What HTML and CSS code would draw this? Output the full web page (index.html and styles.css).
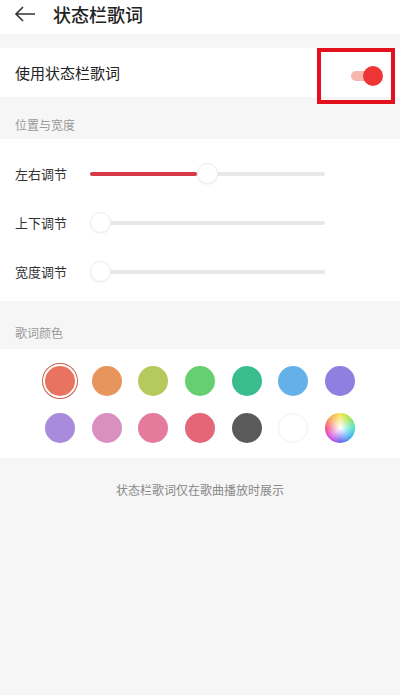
FILE: index.html
```html
<!DOCTYPE html>
<html lang="zh">
<head>
<meta charset="utf-8">
<link rel="stylesheet" href="styles.css">
</head>
<body>
<div class="page">
  <header class="topbar">
    <svg class="back" width="22" height="18" viewBox="0 0 22 18"><path d="M21 9H2M9 2L2 9l7 7" fill="none" stroke="#333" stroke-width="1.6"/></svg>
    <h1 class="title">状态栏歌词</h1>
  </header>
  <div class="gap"></div>
  <div class="switch-row">
    <span class="switch-label">使用状态栏歌词</span>
    <div class="highlight">
      <div class="toggle"><span class="track"></span><span class="knob"></span></div>
    </div>
  </div>
  <div class="section-title first">位置与宽度</div>
  <div class="card sliders">
    <div class="slider-row">
      <span class="slider-label">左右调节</span>
      <div class="slider" style="--p:0.5"><span class="fill"></span><span class="thumb"></span></div>
    </div>
    <div class="slider-row">
      <span class="slider-label">上下调节</span>
      <div class="slider" style="--p:0"><span class="thumb"></span></div>
    </div>
    <div class="slider-row">
      <span class="slider-label">宽度调节</span>
      <div class="slider" style="--p:0"><span class="thumb"></span></div>
    </div>
  </div>
  <div class="section-title">歌词颜色</div>
  <div class="card colors">
    <div class="grid">
      <span class="dot selected c1"></span>
      <span class="dot c2"></span>
      <span class="dot c3"></span>
      <span class="dot c4"></span>
      <span class="dot c5"></span>
      <span class="dot c6"></span>
      <span class="dot c7"></span>
      <span class="dot c8"></span>
      <span class="dot c9"></span>
      <span class="dot c10"></span>
      <span class="dot c11"></span>
      <span class="dot c12"></span>
      <span class="dot c13"></span>
      <span class="dot c14"></span>
    </div>
  </div>
  <p class="note">状态栏歌词仅在歌曲播放时展示</p>
</div>
</body>
</html>
```
FILE: styles.css
```css
* { box-sizing: border-box; }
html, body { margin: 0; padding: 0; }
body {
  background: #f6f6f6;
  font-family: "Noto Sans CJK SC", "Noto Sans", sans-serif;
  width: 400px;
  height: 695px;
  overflow: hidden;
}
.page { display: flex; flex-direction: column; }
.topbar {
  height: 34px;
  background: #fff;
  display: flex;
  align-items: center;
  padding-left: 14px;
  padding-bottom: 7px;
}
.back { display: block; }
.title {
  margin: 0 0 0 17px;
  font-size: 18px;
  font-weight: 500;
  color: #222;
  line-height: 1;
}
.gap { height: 14px; }
.switch-row {
  height: 49px;
  background: #fff;
  display: flex;
  align-items: center;
  justify-content: space-between;
  padding-left: 15px;
  padding-right: 5px;
}
.switch-label { font-size: 15px; color: #222; }
.highlight {
  width: 78px;
  height: 56px;
  border: 4px solid #e3101e;
  display: flex;
  align-items: center;
  justify-content: flex-end;
  padding-right: 8px;
  margin-bottom: -6px;
  position: relative;
  z-index: 1;
}
.toggle { position: relative; width: 34px; height: 20px; }
.track {
  position: absolute;
  left: 2px; right: 8px; top: 5px;
  height: 10px;
  border-radius: 5px;
  background: #f6b7ae;
}
.knob {
  position: absolute;
  right: 0; top: 0;
  width: 20px; height: 20px;
  border-radius: 50%;
  background: #ee3535;
}
.section-title {
  height: 42px;
  padding: 20px 0 0 15px;
  font-size: 12px;
  color: #999;
  line-height: 16px;
}
.section-title.second { height: 47px; }
.section-title:not(.first) { height: 48px; padding-top: 24px; }
.card { background: #fff; }
.sliders { padding: 10px 0 5px; }
.slider-row {
  height: 49px;
  display: flex;
  align-items: center;
  padding-left: 15px;
}
.slider-label { width: 75px; font-size: 13px; color: #333; }
.slider {
  position: relative;
  width: 235px;
  height: 4px;
  border-radius: 2px;
  background: #e8e8e8;
}
.fill {
  position: absolute;
  left: 0; top: 0; bottom: 0;
  width: calc(var(--p) * (100% - 21px));
  border-radius: 2px;
  background: #d83a47;
}
.thumb {
  position: absolute;
  top: 50%;
  left: calc(var(--p) * (100% - 21px));
  width: 21px; height: 21px;
  margin-top: -10.5px;
  border-radius: 50%;
  background: #fff;
  border: 1px solid #ececec;
  box-shadow: 0 1px 2px rgba(0,0,0,0.05);
}
.colors { padding: 17px 0 15px; }
.grid {
  width: 327px;
  margin: 0 auto;
  display: grid;
  grid-template-columns: repeat(7, 1fr);
  row-gap: 17px;
  justify-items: center;
}
.dot {
  width: 30px; height: 30px;
  border-radius: 50%;
  display: block;
}
.dot.selected {
  box-shadow: 0 0 0 2px #fff, 0 0 0 3px #c9604f;
}
.c1 { background: #e8735f; }
.c2 { background: #e7955c; }
.c3 { background: #b5c95c; }
.c4 { background: #66d070; }
.c5 { background: #39bd8d; }
.c6 { background: #64b1e9; }
.c7 { background: #8f7fe0; }
.c8 { background: #a98bdb; }
.c9 { background: #d990c1; }
.c10 { background: #e47b9d; }
.c11 { background: #e56777; }
.c12 { background: #5a5a5a; }
.c13 { background: #fff; border: 1px solid #f0f0f0; }
.c14 {
  background:
    radial-gradient(circle, #fff 0%, rgba(255,255,255,0) 70%),
    conic-gradient(#f7e34a, #9be34a, #3fe3c8, #3aa5f5, #6a5af0, #d64ae6, #f54a7a, #f7a24a, #f7e34a);
}
.note {
  margin: 23px 0 0;
  text-align: center;
  font-size: 12px;
  color: #888;
}
```
